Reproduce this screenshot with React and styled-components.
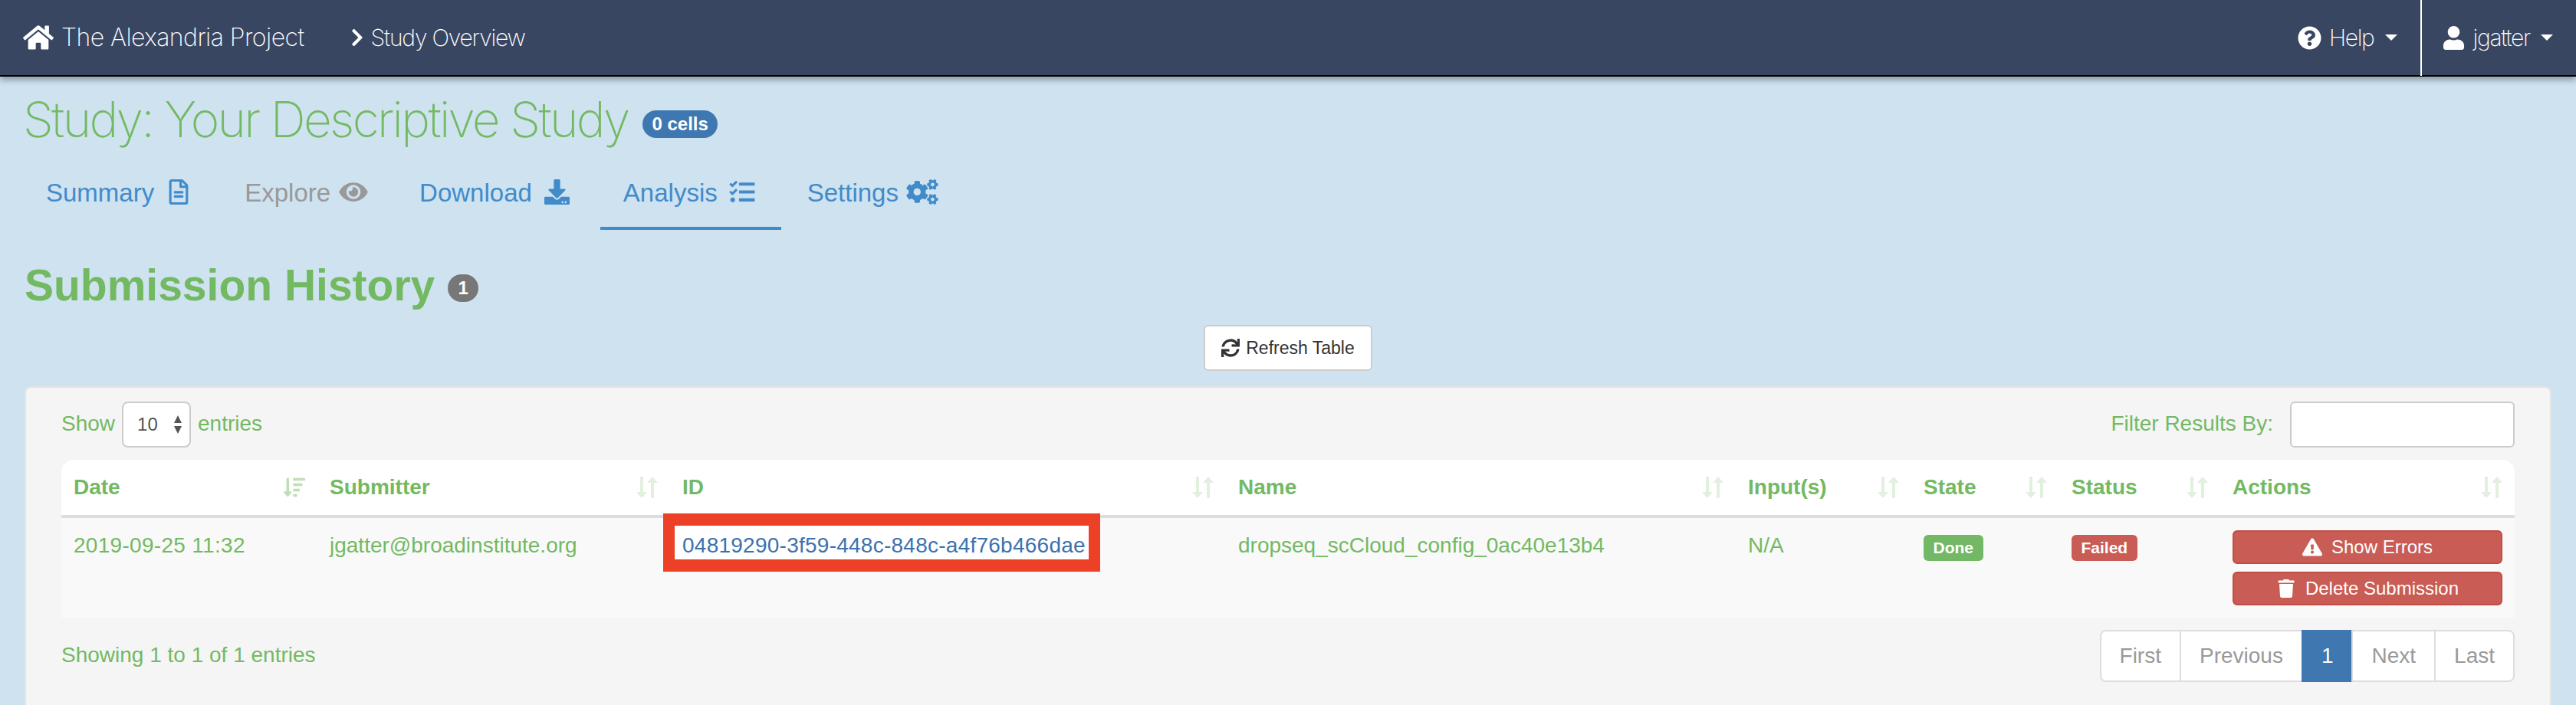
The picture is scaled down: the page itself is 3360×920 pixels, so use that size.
import React from "react";
import styled, { createGlobalStyle } from "styled-components";
import {
  FaHome,
  FaChevronRight,
  FaQuestionCircle,
  FaUser,
  FaRegFileAlt,
  FaEye,
  FaDownload,
  FaTasks,
  FaCogs,
  FaSync,
  FaExclamationTriangle,
  FaTrash,
  FaSortAmountDown,
} from "react-icons/fa";

const GlobalStyle = createGlobalStyle`
  html, body {
    margin: 0;
    height: 920px;
    overflow: hidden;
    background: #cee2f0;
    font-family: "Liberation Sans", Arial, sans-serif;
    font-size: 28px;
    line-height: 40px;
    color: #73b962;
  }
`;

const Navbar = styled.nav`
  height: 98px;
  display: flex;
  align-items: stretch;
  justify-content: space-between;
  background: #394661;
  border-bottom: 2px solid #000;
  box-shadow: 0 4px 8px rgba(0, 0, 0, 0.35);
  color: #fff;
  font-family: "Inter", "Liberation Sans", sans-serif;
  font-weight: 200;
  font-size: 32px;
  position: relative;
`;

const NavGroup = styled.div`
  display: flex;
  align-items: center;
`;

const Brand = styled.a`
  display: flex;
  align-items: center;
  gap: 10px;
  padding-left: 30px;
  margin-right: 60px;
  letter-spacing: -0.55px;
  svg {
    width: 40px;
    height: 36px;
  }
`;

const Crumb = styled.a`
  display: flex;
  align-items: center;
  gap: 9px;
  font-size: 30px;
  letter-spacing: -1.2px;
  svg {
    width: 18px;
    height: 26px;
  }
`;

const Dropdown = styled.a`
  display: flex;
  align-items: center;
  gap: 10px;
  padding-right: ${(p) => p.$right}px;
  padding-left: ${(p) => p.$left}px;
  border-left: ${(p) => (p.$divided ? "2px solid #fff" : "none")};
  height: 100px;
  font-size: 30px;
  letter-spacing: -1.3px;
  svg {
    width: 31px;
    height: 31px;
  }
`;

const Caret = styled.span`
  width: 0;
  height: 0;
  margin-left: 4px;
  border-top: 8px solid #fff;
  border-left: 8px solid transparent;
  border-right: 8px solid transparent;
`;

const Main = styled.main`
  padding: 0 32px;
`;

const Title = styled.h1`
  display: flex;
  align-items: center;
  gap: 19px;
  margin: 20px 0 0 -2px;
  height: 72px;
  font-family: "Inter", "Liberation Sans", sans-serif;
  font-weight: 200;
  font-size: 64px;
  letter-spacing: -2.7px;
`;

const Pill = styled.span`
  display: inline-block;
  padding: 0 12px;
  height: 36px;
  line-height: 36px;
  margin-top: 12px;
  border-radius: 18px;
  background: #3f78b1;
  color: #fff;
  font-family: "Liberation Sans", sans-serif;
  font-weight: 700;
  font-size: 24px;
  letter-spacing: 0;
`;

const Tabs = styled.ul`
  display: flex;
  gap: 4px;
  list-style: none;
  margin: 20px 0 0 -2px;
  padding: 0;
`;

const Tab = styled.li`
  display: flex;
  align-items: flex-start;
  gap: ${(p) => p.$gap}px;
  height: 64px;
  padding: 20px ${(p) => p.$pr}px 0 30px;
  font-size: 33px;
  color: ${(p) => (p.$muted ? "#999" : "#428bca")};
  border-bottom: 4px solid ${(p) => (p.$active ? "#428bca" : "transparent")};
  svg {
    width: ${(p) => p.$icon}px;
    height: 33px;
    margin-top: 2px;
  }
`;

const Heading = styled.h2`
  display: flex;
  align-items: center;
  gap: 17px;
  margin: 36px 0 0;
  height: 72px;
  font-size: 57px;
  font-weight: 700;
`;

const RoundBadge = styled.span`
  width: 40px;
  height: 36px;
  line-height: 36px;
  margin-top: 8px;
  border-radius: 18px;
  background: #777;
  color: #fff;
  font-size: 24px;
  text-align: center;
`;

const RefreshRow = styled.div`
  display: flex;
  justify-content: center;
  margin-top: 16px;
`;

const RefreshButton = styled.button`
  display: flex;
  align-items: center;
  gap: 8px;
  height: 60px;
  padding: 0 21px;
  background: #fff;
  border: 2px solid #ccc;
  border-radius: 6px;
  color: #333;
  font-family: inherit;
  font-size: 23px;
  svg {
    width: 24px;
    height: 24px;
  }
`;

const Panel = styled.section`
  margin-top: 20px;
  padding: 18px 46px 40px;
  background: #f5f5f5;
  border: 2px solid #e3e3e3;
  border-radius: 8px;
`;

const Controls = styled.div`
  display: flex;
  justify-content: space-between;
  align-items: center;
  height: 60px;
`;

const ControlGroup = styled.label`
  display: flex;
  align-items: center;
  gap: ${(p) => p.$gap}px;
  margin-top: -2px;
`;

const PageSelect = styled.div`
  display: flex;
  align-items: center;
  justify-content: space-between;
  box-sizing: border-box;
  width: 90px;
  height: 60px;
  padding: 0 8px 0 18px;
  margin-top: 2px;
  background: #fff;
  border: 2px solid #ccc;
  border-radius: 8px;
  color: #555;
  font-size: 24px;
`;

const FilterInput = styled.input`
  box-sizing: border-box;
  width: 293px;
  height: 60px;
  margin-top: 2px;
  background: #fff;
  border: 2px solid #ccc;
  border-radius: 6px;
`;

const Table = styled.table`
  width: 3200px;
  margin-top: 16px;
  table-layout: fixed;
  border-collapse: separate;
  border-spacing: 0;
`;

const HeadCell = styled.th`
  height: 40px;
  padding: 16px;
  background: #fff;
  border-bottom: 4px solid #ddd;
  text-align: left;
  font-weight: 700;
  &:first-child {
    border-top-left-radius: 16px;
  }
  &:last-child {
    border-top-right-radius: 16px;
  }
`;

const HeadInner = styled.div`
  display: flex;
  align-items: center;
  justify-content: space-between;
  svg {
    width: 28px;
    height: 28px;
    opacity: ${(p) => (p.$sorted ? 0.45 : 0.2)};
    fill: #73b962;
  }
`;

const Cell = styled.td`
  padding: 16px;
  background: #f9f9f9;
  vertical-align: top;
  position: relative;
  letter-spacing: ${(p) => p.$spacing || 0}px;
`;

const Highlight = styled.span`
  position: absolute;
  left: -9px;
  top: -6px;
  box-sizing: border-box;
  width: 570px;
  height: 76px;
  background: #fff;
  border: solid #ec4126;
  border-width: 16px 15px;
`;

const IdLink = styled.a`
  position: relative;
  color: #3c71ae;
  white-space: nowrap;
  letter-spacing: 0.25px;
`;

const Label = styled.span`
  display: inline-block;
  margin-top: 6px;
  padding: 0 12.5px;
  height: 34px;
  line-height: 34px;
  border-radius: 6px;
  background: ${(p) => p.$bg};
  color: #fff;
  font-size: 21px;
  font-weight: 700;
`;

const DangerButton = styled.button`
  display: flex;
  align-items: center;
  justify-content: center;
  gap: 12px;
  box-sizing: border-box;
  width: 352px;
  height: 44px;
  padding: 0;
  background: #c95c54;
  border: 2px solid #c24c44;
  border-radius: 6px;
  color: #fff;
  font-family: inherit;
  font-size: 24px;
  & + & {
    margin-top: 10px;
  }
  svg {
    width: 26px;
    height: 24px;
  }
`;

const Footer = styled.div`
  display: flex;
  justify-content: space-between;
  margin-top: 16px;
`;

const Info = styled.div`
  margin-top: 13px;
`;

const Pager = styled.div`
  display: flex;
  height: 68px;
`;

const PageItem = styled.a`
  box-sizing: border-box;
  padding: 12px 24px;
  margin-left: -2px;
  background: ${(p) => (p.$active ? "#3f78b1" : "#fff")};
  border: 2px solid ${(p) => (p.$active ? "#3f78b1" : "#ddd")};
  color: ${(p) => (p.$active ? "#fff" : "#999")};
  &:first-child {
    border-radius: 8px 0 0 8px;
  }
  &:last-child {
    border-radius: 0 8px 8px 0;
  }
`;

const SortArrows = () => (
  <svg viewBox="0 0 28 28">
    <path d="M5 0h4v20h5l-7 8-7-8h5zM19 8h-5l7-8 7 8h-5v20h-4z" />
  </svg>
);

const SpinArrows = () => (
  <svg width="14" height="26" viewBox="0 0 14 26" fill="#555">
    <path d="M7 1l5 10H2zM7 25L2 15h10z" />
  </svg>
);

const columns = [
  { name: "Date", width: 334, sorted: true },
  { name: "Submitter", width: 460 },
  { name: "ID", width: 725 },
  { name: "Name", width: 665 },
  { name: "Input(s)", width: 229 },
  { name: "State", width: 193 },
  { name: "Status", width: 210 },
  { name: "Actions", width: 384 },
];

const tabs = [
  { name: "Summary", Icon: FaRegFileAlt, icon: 26, gap: 19, pr: 39 },
  { name: "Explore", Icon: FaEye, icon: 38, gap: 11, muted: true, pr: 33 },
  { name: "Download", Icon: FaDownload, icon: 33, gap: 16, pr: 36 },
  { name: "Analysis", Icon: FaTasks, icon: 34, gap: 15, active: true, pr: 34 },
  { name: "Settings", Icon: FaCogs, icon: 42, gap: 10, pr: 30 },
];

export default function App() {
  return (
    <>
      <GlobalStyle />
      <Navbar>
        <NavGroup>
          <Brand>
            <FaHome />
            The Alexandria Project
          </Brand>
          <Crumb>
            <FaChevronRight />
            Study Overview
          </Crumb>
        </NavGroup>
        <NavGroup>
          <Dropdown $right={30} $left={0}>
            <FaQuestionCircle />
            Help
            <Caret />
          </Dropdown>
          <Dropdown $divided $right={30} $left={26}>
            <FaUser />
            jgatter
            <Caret />
          </Dropdown>
        </NavGroup>
      </Navbar>
      <Main>
        <Title>
          Study: Your Descriptive Study
          <Pill>0 cells</Pill>
        </Title>
        <Tabs>
          {tabs.map(({ name, Icon, icon, gap, muted, active, pr }) => (
            <Tab key={name} $icon={icon} $gap={gap} $muted={muted} $active={active} $pr={pr}>
              {name}
              <Icon />
            </Tab>
          ))}
        </Tabs>
        <Heading>
          Submission History
          <RoundBadge>1</RoundBadge>
        </Heading>
        <RefreshRow>
          <RefreshButton>
            <FaSync />
            Refresh Table
          </RefreshButton>
        </RefreshRow>
        <Panel>
          <Controls>
            <ControlGroup $gap={9}>
              Show
              <PageSelect>
                10
                <SpinArrows />
              </PageSelect>
              entries
            </ControlGroup>
            <ControlGroup $gap={22}>
              Filter Results By:
              <FilterInput />
            </ControlGroup>
          </Controls>
          <Table>
            <colgroup>
              {columns.map((c) => (
                <col key={c.name} width={c.width} />
              ))}
            </colgroup>
            <thead>
              <tr>
                {columns.map((c) => (
                  <HeadCell key={c.name}>
                    <HeadInner $sorted={c.sorted}>
                      {c.name}
                      {c.sorted ? <FaSortAmountDown /> : <SortArrows />}
                    </HeadInner>
                  </HeadCell>
                ))}
              </tr>
            </thead>
            <tbody>
              <tr>
                <Cell $spacing={0.3}>2019-09-25 11:32</Cell>
                <Cell>jgatter@broadinstitute.org</Cell>
                <Cell>
                  <Highlight />
                  <IdLink>04819290-3f59-448c-848c-a4f76b466dae</IdLink>
                </Cell>
                <Cell>dropseq_scCloud_config_0ac40e13b4</Cell>
                <Cell>N/A</Cell>
                <Cell>
                  <Label $bg="#73b865">Done</Label>
                </Cell>
                <Cell>
                  <Label $bg="#c95c54">Failed</Label>
                </Cell>
                <Cell>
                  <DangerButton>
                    <FaExclamationTriangle />
                    Show Errors
                  </DangerButton>
                  <DangerButton>
                    <FaTrash />
                    Delete Submission
                  </DangerButton>
                </Cell>
              </tr>
            </tbody>
          </Table>
          <Footer>
            <Info>Showing 1 to 1 of 1 entries</Info>
            <Pager>
              <PageItem>First</PageItem>
              <PageItem>Previous</PageItem>
              <PageItem $active>1</PageItem>
              <PageItem>Next</PageItem>
              <PageItem>Last</PageItem>
            </Pager>
          </Footer>
        </Panel>
      </Main>
    </>
  );
}
